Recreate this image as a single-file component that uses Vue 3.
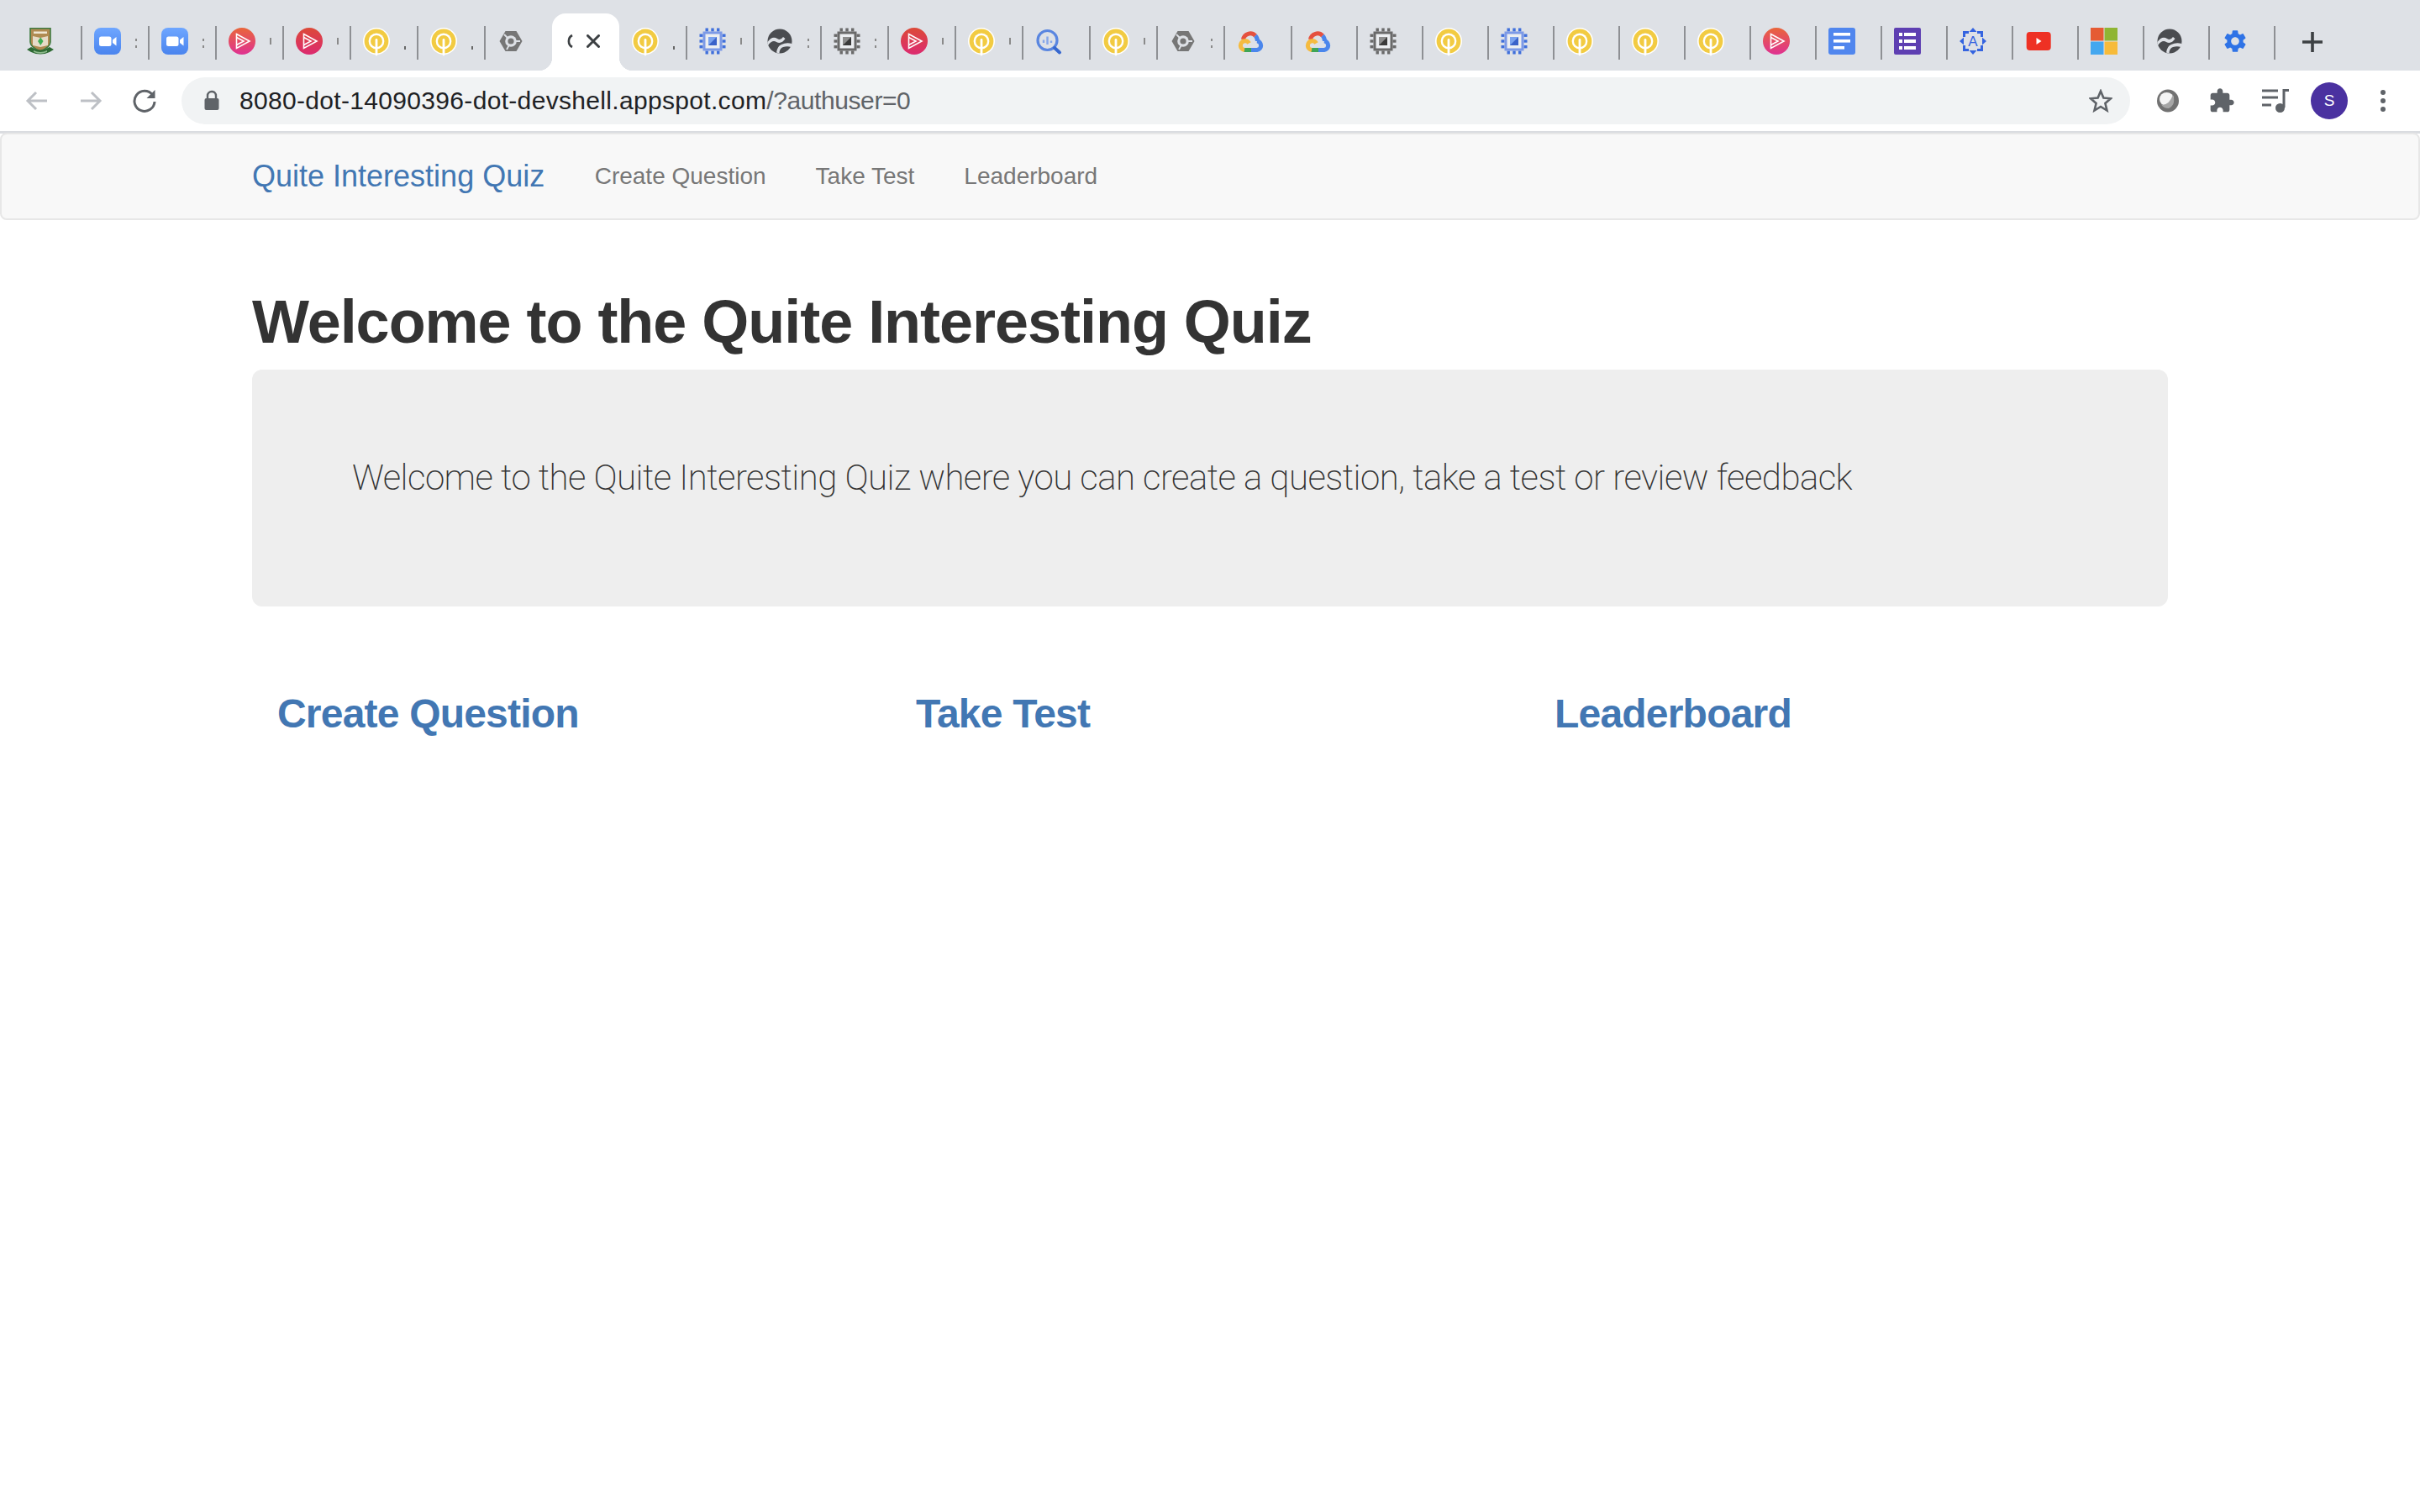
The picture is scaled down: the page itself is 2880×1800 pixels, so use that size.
<template>
  <div class="window">
    <div class="tabstrip">
      <div
        v-for="(tab, i) in tabs"
        :key="i"
        class="tab"
        :class="{ narrow: tab.narrow, active: tab.icon === 'active', nosep: tab.nosep }"
      >
        <template v-if="tab.icon === 'active'">
          <svg class="spinner" viewBox="0 0 9 18" width="9" height="18"><path d="M8 2 A8 8 0 0 0 8 16" fill="none" stroke="#3c4043" stroke-width="2.6" /></svg>
          <svg class="tab-close" viewBox="0 0 16 16" width="16" height="16"><path d="M1.5 1.5 L14.5 14.5 M14.5 1.5 L1.5 14.5" stroke="#3c4043" stroke-width="3" stroke-linecap="round" /></svg>
        </template>
        <svg v-else class="favicon" viewBox="0 0 32 32" width="32" height="32">
          <defs>
            <linearGradient id="zoomg" x1="0" y1="0" x2="0" y2="1"><stop offset="0" stop-color="#6ea6ff" /><stop offset="1" stop-color="#4a84ee" /></linearGradient>
            <linearGradient id="plg" x1="0" y1="0" x2="0" y2="1"><stop offset="0" stop-color="#e9663a" /><stop offset="1" stop-color="#df3192" /></linearGradient>
            <linearGradient id="plr" x1="0" y1="0" x2="0" y2="1"><stop offset="0" stop-color="#dc4a38" /><stop offset="1" stop-color="#dc2a70" /></linearGradient>
          </defs>
          <template v-if="tab.icon === 'crest'">
            <path d="M4 0.8 H28 V17 Q28 23 16 28 Q4 23 4 17 Z" fill="#b08b52" stroke="#3f7a40" stroke-width="1.6" />
            <rect x="8" y="4.5" width="16" height="2.5" fill="#efe7d4" />
            <path d="M7 10 L16 12 L25 10 V21 L16 23 L7 21 Z" fill="#e6dcc8" />
            <path d="M16.3 11.5 L19.5 16 L16.3 21 L13 16 Z" fill="#3fae55" />
            <path d="M0 26 L5 23 Q16 30 27 23 L32 26 L27 29 Q16 34 5 29 Z" fill="#2e6a34" />
            <path d="M8 27 Q16 31 24 27 L24 29 Q16 32.5 8 29 Z" fill="#8bb88a" />
          </template>
          <template v-else-if="tab.icon === 'zoom'">
            <rect width="32" height="32" rx="8" fill="url(#zoomg)" />
            <rect x="6" y="10.5" width="14.5" height="11.5" rx="2.5" fill="#fff" />
            <path d="M22 14.5 L26.5 11 V21.5 L22 18 Z" fill="#fff" />
          </template>
          <template v-else-if="tab.icon === 'plural' || tab.icon === 'pluralred'">
            <circle cx="16" cy="16" r="16" :fill="tab.icon === 'plural' ? 'url(#plg)' : 'url(#plr)'" />
            <path d="M9.5 7.5 L25 16 L9.5 24.5 Z" fill="none" stroke="#fff" stroke-width="1.6" />
            <path d="M9.5 11.5 L18 16 L9.5 20.5" fill="none" stroke="#fff" stroke-width="1.6" />
          </template>
          <template v-else-if="tab.icon === 'q'">
            <circle cx="16" cy="16" r="16" fill="#fff" />
            <circle cx="16" cy="16" r="14.4" fill="#f2cb42" />
            <circle cx="16" cy="16" r="9.4" fill="#fff" />
            <circle cx="16" cy="16" r="7" fill="#f2cb42" />
            <path d="M16 14.5 V32" stroke="#fff" stroke-width="2.8" stroke-linecap="round" />
          </template>
          <template v-else-if="tab.icon === 'hex'">
            <path d="M9.5 4 H22.5 L29.5 16 L22.5 28 H9.5 L2.5 16 Z" fill="#767676" />
            <circle cx="16" cy="16" r="6.8" fill="#dee1e6" />
            <path d="M8 8 L12 12 M27 16 H21 M11 26 L14 20.5" stroke="#dee1e6" stroke-width="1.8" />
            <circle cx="16" cy="16" r="3.6" fill="#767676" />
          </template>
          <template v-else-if="tab.icon === 'chip' || tab.icon === 'chipblue'">
            <g :fill="tab.icon === 'chip' ? '#6a6a6a' : '#3f6fdb'">
              <rect v-for="p in [7.5, 14.3, 21]" :key="'t' + p" :x="p" y="0.5" width="3.4" height="4" />
              <rect v-for="p in [7.5, 14.3, 21]" :key="'b' + p" :x="p" y="27.5" width="3.4" height="4" />
              <rect v-for="p in [7.5, 14.3, 21]" :key="'l' + p" x="0.5" :y="p" width="4" height="3.4" />
              <rect v-for="p in [7.5, 14.3, 21]" :key="'r' + p" x="27.5" :y="p" width="4" height="3.4" />
            </g>
            <rect x="6" y="6" width="20" height="20" fill="#eceef1" :stroke="tab.icon === 'chip' ? '#6a6a6a' : '#7d9ae6'" stroke-width="3" />
            <rect x="11" y="11" width="10" height="10" :fill="tab.icon === 'chip' ? '#8c8c8c' : '#7aa2ee'" />
            <path d="M21 11 V21 H11 Z" :fill="tab.icon === 'chip' ? '#3a3a3a' : '#3a62c9'" />
          </template>
          <template v-else-if="tab.icon === 'globe'">
            <circle cx="16" cy="16" r="14.5" fill="#4a4c50" />
            <path d="M1.5 17 Q7 9 13 13 Q17 15.5 20 11 L22.5 13 Q18 20 12 17 Q7 14 2 21 Z" fill="#dee1e6" />
            <path d="M30.5 19 Q24 17 18 20 Q13 22 12 29.5 L15.5 30.5 Q15.5 24.5 20 23 Q25 21.5 29.5 23 Z" fill="#dee1e6" />
          </template>
          <template v-else-if="tab.icon === 'bq'">
            <circle cx="14.5" cy="15" r="11.5" fill="none" stroke="#5a86e0" stroke-width="3.2" />
            <path d="M10 14.5 V18 M14.5 10.5 V20 M19 15.5 V18" stroke="#86a7ea" stroke-width="2.4" />
            <path d="M23 24 L29 29.5" stroke="#3768cf" stroke-width="4" stroke-linecap="round" />
          </template>
          <template v-else-if="tab.icon === 'gcloud'">
            <path d="M7.5 14 A8.5 8.5 0 0 1 22 9.5" fill="none" stroke="#e5513f" stroke-width="5" />
            <path d="M22 9.5 Q24.5 12 24.5 16" fill="none" stroke="#4a86ec" stroke-width="5" />
            <path d="M24 15.8 A5.4 5.4 0 0 1 24 26.5 H17" fill="none" stroke="#4a86ec" stroke-width="5" />
            <path d="M8 26.5 H17" fill="none" stroke="#3fa556" stroke-width="5" />
            <path d="M9 26.5 A5.4 5.4 0 0 1 9 15.8 A5.4 5.4 0 0 1 14.5 18.5" fill="none" stroke="#f5bb3f" stroke-width="5" />
          </template>
          <template v-else-if="tab.icon === 'docs'">
            <rect width="32" height="32" rx="3" fill="#5086ee" />
            <rect x="6" y="6" width="20" height="3.6" fill="#fff" />
            <rect x="6" y="14" width="20" height="3.6" fill="#fff" />
            <rect x="6" y="22" width="13" height="3.6" fill="#fff" />
          </template>
          <template v-else-if="tab.icon === 'forms'">
            <rect width="32" height="32" rx="2" fill="#5e3fb2" />
            <rect v-for="y in [6, 14, 22]" :key="'d' + y" x="6" :y="y" width="4" height="4" fill="#fff" />
            <rect v-for="y in [6, 14, 22]" :key="'l' + y" x="12" :y="y" width="14" height="4" fill="#fff" />
          </template>
          <template v-else-if="tab.icon === 'agear'">
            <path d="M16 0 L20.5 5 H11.5 Z M16 32 L20.5 27 H11.5 Z M0 16 L5 11.5 V20.5 Z M32 16 L27 11.5 V20.5 Z" fill="#3564e0" />
            <path d="M11 5.5 H5.5 V11 M21 5.5 H26.5 V11 M11 26.5 H5.5 V21 M21 26.5 H26.5 V21" fill="none" stroke="#3564e0" stroke-width="3" />
            <text x="16" y="22" text-anchor="middle" class="agear-a">A</text>
          </template>
          <template v-else-if="tab.icon === 'yt'">
            <rect x="1.7" y="5" width="29" height="22" rx="4" fill="#ee3124" />
            <path d="M13.5 12 L19.5 16 L13.5 20 Z" fill="#fff" />
          </template>
          <template v-else-if="tab.icon === 'ms'">
            <rect width="15.5" height="15.5" fill="#e55b33" />
            <rect x="16.5" width="15.5" height="15.5" fill="#8fb533" />
            <rect y="16.5" width="15.5" height="15.5" fill="#44a7ef" />
            <rect x="16.5" y="16.5" width="15.5" height="15.5" fill="#f7bb3a" />
          </template>
          <template v-else-if="tab.icon === 'gear'">
            <path transform="scale(1.333)" fill="#2f73e6" d="M19.14 12.94c.04-.3.06-.61.06-.94 0-.32-.02-.64-.07-.94l2.03-1.58c.18-.14.23-.41.12-.61l-1.92-3.32c-.12-.22-.37-.29-.59-.22l-2.39.96c-.5-.38-1.03-.7-1.62-.94l-.36-2.54c-.04-.24-.24-.41-.48-.41h-3.84c-.24 0-.43.17-.47.41l-.36 2.54c-.59.24-1.13.57-1.62.94l-2.39-.96c-.22-.08-.47 0-.59.22L2.74 8.87c-.12.21-.08.47.12.61l2.03 1.58c-.05.3-.09.63-.09.94s.02.64.07.94l-2.03 1.58c-.18.14-.23.41-.12.61l1.92 3.32c.12.22.37.29.59.22l2.39-.96c.5.38 1.03.7 1.62.94l.36 2.54c.05.24.24.41.48.41h3.84c.24 0 .44-.17.47-.41l.36-2.54c.59-.24 1.13-.56 1.62-.94l2.39.96c.22.08.47 0 .59-.22l1.92-3.32c.12-.22.07-.47-.12-.61l-2.01-1.58zM12 15.6c-1.98 0-3.6-1.62-3.6-3.6s1.62-3.6 3.6-3.6 3.6 1.62 3.6 3.6-1.62 3.6-3.6 3.6z" />
          </template>
        </svg>
        <span v-if="tab.speck" class="speck" :class="tab.speck"></span>
      </div>
      <svg class="newtab" viewBox="0 0 24 24" width="24" height="24"><path d="M12 0 V24 M0 12 H24" stroke="#3c4043" stroke-width="3.6" /></svg>
    </div>

    <div class="toolbar">
      <div class="navbtn">
        <svg viewBox="0 0 28 28" width="28" height="28"><path d="M26 14 H3 M13 4 L3 14 L13 24" fill="none" stroke="#bdc0c5" stroke-width="3" /></svg>
      </div>
      <div class="navbtn">
        <svg viewBox="0 0 28 28" width="28" height="28"><path d="M2 14 H25 M15 4 L25 14 L15 24" fill="none" stroke="#bdc0c5" stroke-width="3" /></svg>
      </div>
      <div class="navbtn">
        <svg viewBox="0 0 28 28" width="28" height="28"><path d="M23.5 7 A 12 12 0 1 0 26 15" fill="none" stroke="#5f6368" stroke-width="3" /><path d="M26.5 1 V11 H16.5 Z" fill="#5f6368" /></svg>
      </div>
      <div class="omnibox">
        <svg class="lock" viewBox="0 0 20 26" width="20" height="26"><path d="M5 11 V7 A5 5 0 0 1 15 7 V11" fill="none" stroke="#5f6368" stroke-width="2.4" /><rect x="1.5" y="10" width="17" height="14" rx="2" fill="#5f6368" /></svg>
        <span class="url">8080-dot-14090396-dot-devshell.appspot.com<span class="url-rest">/?authuser=0</span></span>
        <svg class="star" viewBox="0 0 28 28" width="28" height="28"><path d="M14 2.5 L17.4 10.6 L26 11.3 L19.4 17 L21.5 25.5 L14 21 L6.5 25.5 L8.6 17 L2 11.3 L10.6 10.6 Z" fill="none" stroke="#5f6368" stroke-width="2.6" /></svg>
      </div>
      <div class="actions">
        <div class="action">
          <svg viewBox="0 0 28 32" width="28" height="32"><ellipse cx="14" cy="16" rx="13" ry="13.5" fill="#727272" /><ellipse cx="12.5" cy="14" rx="8.5" ry="8" fill="#f4f4f4" /><path d="M6 20.5 Q15 22 20 9 Q24 20 15 25 Q9 25 6 20.5 Z" fill="#a6a6a6" /></svg>
        </div>
        <div class="action">
          <svg viewBox="0 0 24 24" width="32" height="32"><path fill="#5f6368" d="M20.5 11H19V7c0-1.1-.9-2-2-2h-4V3.5C13 2.12 11.88 1 10.5 1S8 2.12 8 3.5V5H4c-1.1 0-1.99.9-1.99 2v3.8H3.5c1.49 0 2.7 1.21 2.7 2.7s-1.21 2.7-2.7 2.7H2V20c0 1.1.9 2 2 2h3.8v-1.5c0-1.49 1.21-2.7 2.7-2.7 1.49 0 2.7 1.21 2.7 2.7V22H17c1.1 0 2-.9 2-2v-4h1.5c1.38 0 2.5-1.12 2.5-2.5S21.88 11 20.5 11z" /></svg>
        </div>
        <div class="action">
          <svg viewBox="0 0 34 32" width="34" height="32"><path d="M1 4 H20 M1 12 H20 M1 21 H12" stroke="#5f6368" stroke-width="3" /><path d="M27 24 V3.5 H33" fill="none" stroke="#5f6368" stroke-width="3" /><circle cx="22.5" cy="24.5" r="5.5" fill="#5f6368" /></svg>
        </div>
        <div class="action">
          <span class="avatar">S</span>
        </div>
        <div class="action">
          <span class="kebab"><i></i><i></i><i></i></span>
        </div>
      </div>
    </div>

    <nav class="navbar">
      <a class="brand">Quite Interesting Quiz</a>
      <a v-for="link in links" :key="link" class="navlink">{{ link }}</a>
    </nav>

    <main class="container">
      <h1>Welcome to the Quite Interesting Quiz</h1>
      <div class="jumbotron">
        <p>Welcome to the Quite Interesting Quiz where you can create a question, take a test or review feedback</p>
      </div>
      <div class="row">
        <div v-for="link in links" :key="link" class="col">
          <h3>{{ link }}</h3>
        </div>
      </div>
    </main>
  </div>
</template>

<script setup>
const links = ['Create Question', 'Take Test', 'Leaderboard']

const wide = [
  ['crest'], ['zoom', 'colon'], ['zoom', 'colon'], ['plural', 'bar'], ['pluralred', 'bar'],
  ['q', 'dot'], ['q', 'dot'], ['hex'], ['active'], ['q', 'dot'],
  ['chipblue', 'bar'], ['globe', 'colon'], ['chip', 'colon'], ['pluralred', 'bar'], ['q', 'bar'],
  ['bq'], ['q', 'bar'], ['hex', 'colon'], ['gcloud']
]
const narrow = [
  'gcloud', 'chip', 'q', 'chipblue', 'q', 'q', 'q', 'plural', 'docs', 'forms', 'agear', 'yt', 'ms', 'globe', 'gear'
]

const tabs = [
  ...wide.map(([icon, speck]) => ({ icon, speck })),
  ...narrow.map(icon => ({ icon, narrow: true }))
]
// no divider either side of the selected tab
tabs[7].nosep = true
tabs[8].nosep = true
</script>

<style>
body { background: #fff; }
</style>

<style scoped>
.window { width: 2880px; height: 1800px; background: #fff; font-family: "Liberation Sans", Arial, sans-serif; color: #333; overflow: hidden; }

.tabstrip { height: 84px; background: #dee1e6; display: flex; align-items: flex-end; padding-left: 17px; box-sizing: border-box; }
.tab { width: 80px; height: 68px; flex: none; position: relative; display: flex; align-items: center; box-sizing: border-box; padding: 0 0 2px 15px; }
.tab.narrow { width: 78px; }
.tab::after { content: ""; position: absolute; right: -1px; top: 15px; height: 40px; width: 2px; background: #8e9094; }
.tab.nosep::after { display: none; }
.favicon { flex: none; overflow: visible; }
.agear-a { font-family: "Liberation Sans", Arial, sans-serif; font-size: 17px; fill: #3564e0; }
.speck { position: absolute; left: 64px; width: 2px; }
.speck.colon { top: 30px; height: 11px; background: linear-gradient(#8a8a8a 0 3px, transparent 3px 8px, #8a8a8a 8px); }
.speck.bar { top: 29px; height: 8px; background: #8a8a8a; }
.speck.dot { top: 39px; height: 4px; background: #666; }

.tab.active { background: #fff; border-radius: 16px 16px 0 0; padding: 0 0 2px 16px; }
.tab.active::before, .tab.active::after { content: ""; display: block; position: absolute; top: auto; bottom: 0; width: 16px; height: 16px; background: radial-gradient(circle at var(--cx) 0, transparent 16px, #fff 16.5px); }
.tab.active::before { left: -16px; --cx: 0; }
.tab.active::after { right: -16px; --cx: 16px; }
.spinner { flex: none; }
.tab-close { flex: none; margin-left: 16px; }

.newtab { flex: none; margin: 0 0 22px 33px; }

.toolbar { height: 75px; box-sizing: border-box; border-bottom: 3px solid #dadce0; display: flex; align-items: center; padding: 0 12px; background: #fff; }
.navbtn { width: 64px; flex: none; display: flex; justify-content: center; }
.omnibox { flex: 1; margin-left: 12px; height: 56px; border-radius: 28px; background: #f1f3f4; display: flex; align-items: center; padding: 0 21px 0 26px; }
.lock { flex: none; }
.url { flex: 1; margin-left: 23px; font-size: 30px; letter-spacing: 0.32px; color: #202124; white-space: nowrap; }
.url-rest { color: #5f6368; letter-spacing: -0.4px; }
.star { flex: none; }
.actions { display: flex; margin-left: 13px; }
.action { width: 64px; height: 64px; display: flex; align-items: center; justify-content: center; }
.avatar { width: 44px; height: 44px; border-radius: 50%; background: #4a31a0; color: #fff; font-size: 19px; display: flex; align-items: center; justify-content: center; }
.kebab { display: flex; flex-direction: column; gap: 4px; }
.kebab i { display: block; width: 6px; height: 6px; border-radius: 50%; background: #5f6368; }

.navbar { height: 104px; box-sizing: border-box; margin-top: -1px; background: #f8f8f8; border: 2px solid #e7e7e7; border-radius: 8px; display: flex; align-items: center; padding-left: 298px; }
.brand { font-size: 36px; color: #4277b3; margin-right: 30px; }
.navlink { font-size: 28px; color: #777; padding: 0 29.5px; }

.container { width: 2280px; margin-left: 300px; }
h1 { margin: 82px 0 0; font-size: 72px; line-height: 79px; font-weight: 700; letter-spacing: -1.03px; color: #333; }
.jumbotron { margin-top: 17px; height: 282px; box-sizing: border-box; background: #eee; border-radius: 12px; padding: 99px 0 0 119px; }
.jumbotron p { margin: 0; font-family: Roboto, "Liberation Sans", sans-serif; font-size: 42px; line-height: 60px; font-weight: 200; letter-spacing: -0.54px; color: #333; white-space: nowrap; }
.row { display: flex; margin-top: 100px; }
.col { width: 760px; box-sizing: border-box; padding-left: 30px; }
h3 { margin: 0; font-size: 48px; line-height: 56px; font-weight: 700; letter-spacing: -0.8px; color: #4277b3; }
</style>
